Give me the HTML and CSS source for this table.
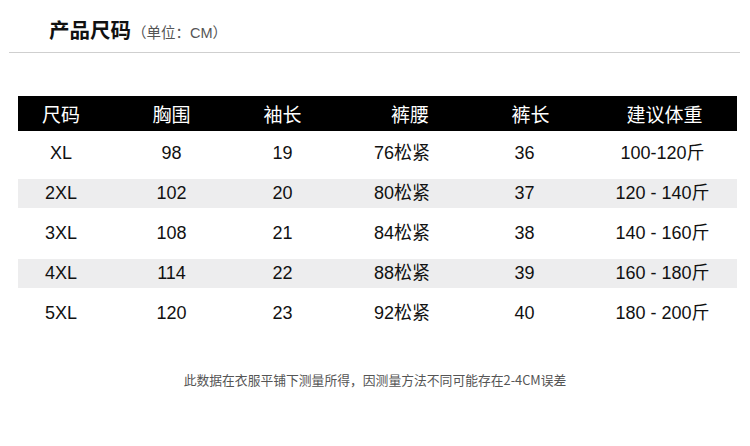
FILE: index.html
```html
<!DOCTYPE html>
<html lang="zh">
<head>
<meta charset="utf-8">
<link rel="stylesheet" href="styles.css">
</head>
<body>
<div class="page">
  <div class="title-row">
    <span class="title">产品尺码</span><span class="unit">（单位：CM）</span>
  </div>
  <div class="table">
    <div class="row head">
      <div class="c c1">尺码</div><div class="c c2">胸围</div><div class="c c3">袖长</div><div class="c c4">裤腰</div><div class="c c5">裤长</div><div class="c c6">建议体重</div>
    </div>
    <div class="row">
      <div class="c c1">XL</div><div class="c c2">98</div><div class="c c3">19</div><div class="c c4">76松紧</div><div class="c c5">36</div><div class="c c6">100-120斤</div>
    </div>
    <div class="row alt">
      <div class="c c1">2XL</div><div class="c c2">102</div><div class="c c3">20</div><div class="c c4">80松紧</div><div class="c c5">37</div><div class="c c6">120 - 140斤</div>
    </div>
    <div class="row">
      <div class="c c1">3XL</div><div class="c c2">108</div><div class="c c3">21</div><div class="c c4">84松紧</div><div class="c c5">38</div><div class="c c6">140 - 160斤</div>
    </div>
    <div class="row alt">
      <div class="c c1">4XL</div><div class="c c2">114</div><div class="c c3">22</div><div class="c c4">88松紧</div><div class="c c5">39</div><div class="c c6">160 - 180斤</div>
    </div>
    <div class="row">
      <div class="c c1">5XL</div><div class="c c2">120</div><div class="c c3">23</div><div class="c c4">92松紧</div><div class="c c5">40</div><div class="c c6">180 - 200斤</div>
    </div>
  </div>
  <div class="note">此数据在衣服平铺下测量所得，因测量方法不同可能存在2-4CM误差</div>
</div>
</body>
</html>
```

FILE: styles.css
```css
html, body {
  margin: 0;
  padding: 0;
  background: #fff;
}
.page {
  width: 750px;
  height: 446px;
  font-family: "Liberation Sans", "Noto Sans CJK SC", sans-serif;
  color: #111;
}
.title-row {
  margin: 0 10px 0 9px;
  height: 53px;
  box-sizing: border-box;
  padding: 16px 0 0 40px;
  border-bottom: 1px solid #cfcfcf;
  display: flex;
  align-items: baseline;
  overflow: hidden;
}
.title {
  font-family: "Noto Sans CJK SC", sans-serif;
  font-weight: 700;
  font-size: 20.5px;
  line-height: 26px;
  color: #111;
}
.unit {
  font-family: "Liberation Sans", "Noto Sans CJK SC", sans-serif;
  font-size: 14.5px;
  line-height: 26px;
  color: #555;
  margin-left: 1px;
}
.table {
  margin: 43px 13px 0 18px;
  display: flex;
  flex-direction: column;
  gap: 11px;
}
.row {
  display: grid;
  grid-template-columns: 98px 111px 119px 121px 127px 143px;
  height: 29px;
  line-height: 29px;
  font-size: 18px;
}
.row.head {
  height: 35px;
  line-height: 35px;
  background: #000;
  color: #fff;
  font-family: "Noto Sans CJK SC", sans-serif;
  font-size: 19px;
  margin-bottom: -3px;
}
.row.alt {
  background: #ededee;
}
.c {
  text-align: center;
  white-space: nowrap;
}
.c1 { padding-right: 12px; }
.c3 { padding-right: 8px; }
.c4 { padding-right: 9px; }
.c5 { padding-right: 12px; }
.c6 { padding-right: 6px; }
.head .c4 { padding-right: 0; padding-left: 7px; }
.head .c5 { padding-right: 0; }
.head .c6 { padding-right: 2px; }
.note {
  margin-top: 42px;
  text-align: center;
  font-family: "Noto Sans CJK SC", sans-serif;
  font-size: 12.8px;
  line-height: 20px;
  color: #555;
}
```
